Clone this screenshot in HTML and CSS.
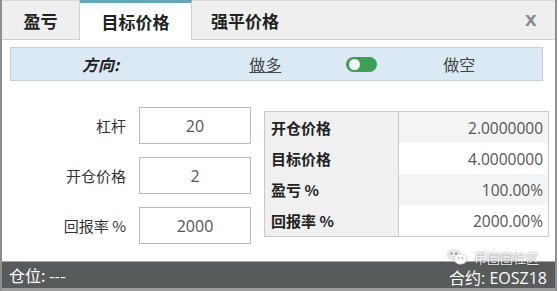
FILE: index.html
```html
<!DOCTYPE html>
<html>
<head>
  <title>目标价格</title>
  <link rel="stylesheet" href="styles.css">
</head>
<body>
  <div class="panel">
    <div class="tabs">
      <div class="tab">盈亏</div>
      <div class="tab active">目标价格</div>
      <div class="tab">强平价格</div>
      <div class="tab-fill"></div>
      <div class="close">x</div>
    </div>

    <div class="direction">
      <span class="dir-label">方向:</span>
      <span class="dir-long">做多</span>
      <span class="toggle"><span class="knob"></span></span>
      <span class="dir-short">做空</span>
    </div>

    <div class="content">
      <div class="form">
        <div class="form-row">
          <label>杠杆</label>
          <div class="input">20</div>
        </div>
        <div class="form-row">
          <label>开仓价格</label>
          <div class="input">2</div>
        </div>
        <div class="form-row">
          <label>回报率 %</label>
          <div class="input">2000</div>
        </div>
      </div>

      <table class="result">
        <tr><th>开仓价格</th><td>2.0000000</td></tr>
        <tr><th>目标价格</th><td>4.0000000</td></tr>
        <tr><th>盈亏 %</th><td>100.00%</td></tr>
        <tr><th>回报率 %</th><td>2000.00%</td></tr>
      </table>
    </div>

    <div class="footer">
      <span>仓位: ---</span>
      <span class="contract">合约: EOSZ18</span>
    </div>

    <div class="watermark">
      <svg width="22" height="18" viewBox="0 0 22 18">
        <ellipse cx="8" cy="7" rx="7.5" ry="6" fill="#e8e8e8"/>
        <ellipse cx="14.5" cy="11" rx="6.5" ry="5.2" fill="#fff" stroke="#bbb" stroke-width="0.6"/>
        <circle cx="5.5" cy="5.5" r="1" fill="#777"/>
        <circle cx="10" cy="5.5" r="1" fill="#777"/>
        <circle cx="12.5" cy="10" r="0.8" fill="#888"/>
        <circle cx="16.5" cy="10" r="0.8" fill="#888"/>
      </svg>
      <span>币圈圈社区</span>
    </div>
  </div>
</body>
</html>
```

FILE: styles.css
```css
body {
  margin: 0;
  background: #fff;
  font-family: "Noto Sans CJK SC", "Noto Sans", sans-serif;
  color: #333;
}
.panel {
  width: 553px;
  height: 291px;
  border-left: 2px solid #8e8e8e;
  border-right: 2px solid #8e8e8e;
  display: flex;
  flex-direction: column;
  position: relative;
  background: #fff;
}
.tabs {
  height: 40px;
  display: flex;
  background: #efefef;
  border-top: 1px solid #d8d8d8;
  box-sizing: border-box;
}
.tab {
  width: 78px;
  display: flex;
  align-items: center;
  justify-content: center;
  font-size: 17px;
  font-weight: 600;
  color: #222;
  border-right: 1px solid #cfcfcf;
  border-bottom: 1px solid #cfcfcf;
  box-sizing: border-box;
}
.tab.active {
  width: 112px;
  background: #fff;
  border-top: 3px solid #5fa6b6;
  border-bottom: none;
  margin-top: -1px;
}
.tab:nth-child(3) {
  width: 104px;
  justify-content: flex-start;
  padding-left: 19px;
  border-right: none;
}
.tab-fill {
  flex: 1;
  border-bottom: 1px solid #cfcfcf;
}
.close {
  width: 30px;
  display: flex;
  align-items: center;
  font-family: "Liberation Sans", sans-serif;
  font-size: 21px;
  font-weight: bold;
  color: #8a8a8a;
  border-bottom: 1px solid #cfcfcf;
  padding-bottom: 2px;
  box-sizing: border-box;
}
.direction {
  margin: 7px 12px 0 8px;
  height: 34px;
  background: #dbe9f4;
  border: 1px solid #c6cfd6;
  box-sizing: border-box;
  display: flex;
  align-items: center;
  font-size: 16px;
  color: #333;
}
.dir-label {
  margin-left: 71px;
  font-style: italic;
  font-weight: 600;
  color: #222;
}
.dir-long {
  margin-left: 130px;
  text-decoration: underline;
  color: #444;
}
.toggle {
  margin-left: 65px;
  width: 31px;
  height: 15px;
  border-radius: 8px;
  background: #3e9f57;
  position: relative;
}
.knob {
  position: absolute;
  left: 3px;
  top: 2px;
  width: 11px;
  height: 11px;
  border-radius: 50%;
  background: #f4f4f4;
}
.dir-short {
  margin-left: 66px;
  color: #444;
}
.content {
  flex: 1;
  display: flex;
}
.form {
  width: 262px;
  padding-top: 26px;
  display: flex;
  flex-direction: column;
  gap: 13px;
}
.form-row {
  display: flex;
  align-items: center;
  height: 37px;
}
.form-row label {
  width: 124px;
  text-align: right;
  font-size: 15px;
  color: #333;
  padding-right: 13px;
}
.input {
  width: 112px;
  height: 37px;
  border: 1px solid #bcbcbc;
  box-sizing: border-box;
  display: flex;
  align-items: center;
  justify-content: center;
  font-family: "Open Sans", "Noto Sans", sans-serif;
  font-size: 16px;
  color: #555;
}
.result {
  margin-top: 30px;
  width: 285px;
  height: 126px;
  border-collapse: collapse;
  border: 1px solid #c9c9c9;
  font-size: 15px;
  align-self: flex-start;
}
.result th {
  width: 127px;
  text-align: left;
  padding: 0 0 0 6px;
  font-weight: bold;
  color: #222;
  background: #f0f0f0;
  border-right: 1px solid #c9c9c9;
  height: 31px;
}
.result td {
  text-align: right;
  padding: 0 5px 0 0;
  font-family: "Open Sans", "Noto Sans", sans-serif;
  font-size: 15.5px;
  color: #555;
  background: #f4f4f4;
}
.result tr:nth-child(even) td {
  background: #fff;
}
.footer {
  height: 26px;
  margin-bottom: 3px;
  background: #575b5b;
  border-top: 1px solid #a8a8a8;
  display: flex;
  align-items: center;
  justify-content: space-between;
  padding: 0 8px 0 7px;
  color: #fff;
  font-size: 16px;
}
.panel::after {
  content: '';
  position: absolute;
  left: 0;
  right: 0;
  bottom: 0;
  height: 3px;
  background: #9c9c9c;
}
.contract {
  font-family: "Open Sans", "Noto Sans CJK SC", sans-serif;
  font-size: 16px;
  padding-top: 3px;
}
.watermark {
  position: absolute;
  right: 16px;
  bottom: 25px;
  display: flex;
  align-items: center;
  gap: 6px;
  color: rgba(255, 255, 255, 0.9);
  font-size: 13px;
  line-height: 15px;
  text-shadow: 0 0 2px rgba(0, 0, 0, 0.6);
}
```
